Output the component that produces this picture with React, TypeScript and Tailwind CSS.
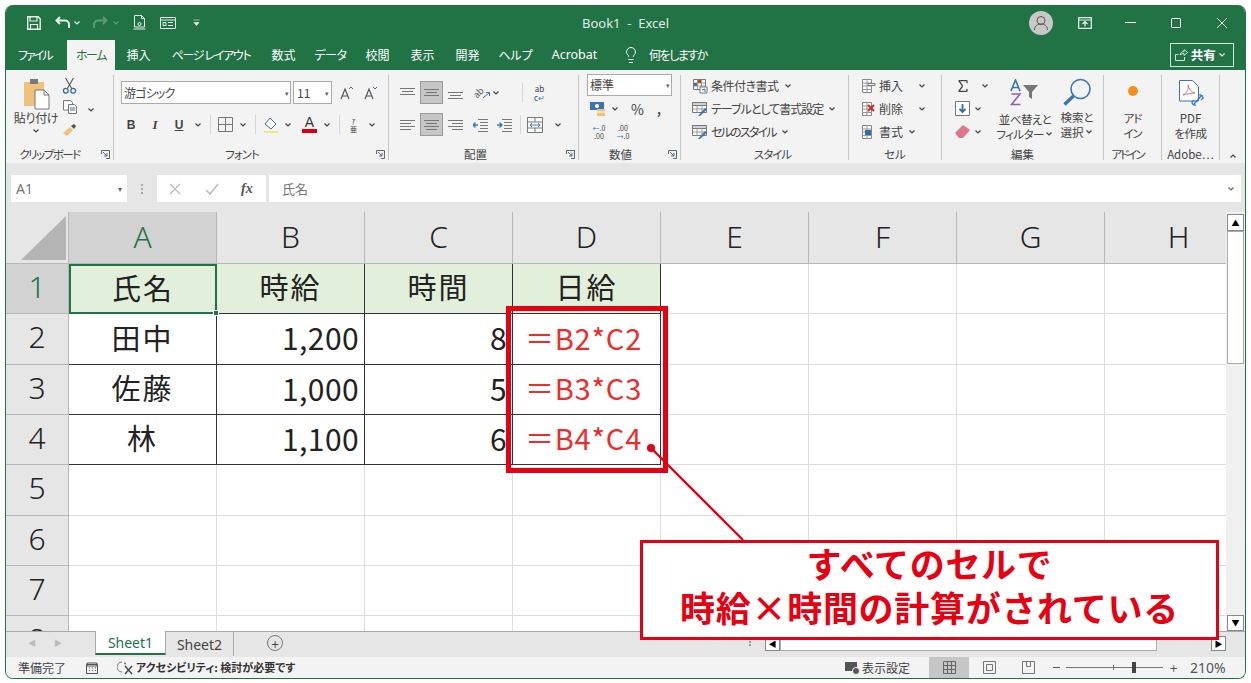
import * as React from "react"
import { Lightbulb, Sigma } from "lucide-react"

const jp = "font-['Noto_Sans_CJK_JP','Noto_Sans',sans-serif]"
const palt = "[font-feature-settings:'palt']"

function Chev({ className = "" }: { className?: string }) {
  return (
    <svg width="14" height="8" viewBox="0 0 14 8" className={className}>
      <path d="M4.500 2.500 7 5l2.500-2.500" fill="none" stroke="currentColor" strokeWidth="1.200" />
    </svg>
  )
}

function Launcher() {
  return (
    <svg width="9" height="9" viewBox="0 0 9 9" className="absolute bottom-[1px] right-[3px] text-[#666]">
      <path d="M.5 4V.5H8.500V8.500H5" fill="none" stroke="currentColor" />
      <path d="M2 2l4 4M6 3v3H3" fill="none" stroke="#4a6f8f" />
    </svg>
  )
}

function Lines({ w = 15, rows }: { w?: number; rows: [number, number, number][] }) {
  return (
    <svg width={w} height="14" viewBox={`0 0 ${w} 14`}>
      {rows.map(([x1, x2, y], i) => (
        <path key={i} d={`M${x1} ${y}H${x2}`} stroke="#777" strokeWidth="1" />
      ))}
    </svg>
  )
}

const topLines: [number, number, number][] = [[0, 15, 2.5], [2, 13, 5.5], [0, 15, 8.5]]
const midLines: [number, number, number][] = [[0, 15, 3.5], [2, 13, 6.5], [0, 15, 9.5]]
const botLines: [number, number, number][] = [[0, 15, 6.5], [2, 13, 9.5], [0, 15, 12.5]]
const leftLines: [number, number, number][] = [[0, 15, 2.5], [0, 11, 5.5], [0, 15, 8.5], [0, 11, 11.5]]
const centerLines: [number, number, number][] = [[0, 15, 2.5], [2, 13, 5.5], [0, 15, 8.5], [2, 13, 11.5]]
const rightLines: [number, number, number][] = [[0, 15, 2.5], [4, 15, 5.5], [0, 15, 8.5], [4, 15, 11.5]]

function Active({ children }: { children: React.ReactNode }) {
  return (
    <span className="ml-[5px] flex h-[23px] w-[23px] items-center justify-center border border-[#9a9a9a] bg-[#c6c6c6]">
      {children}
    </span>
  )
}

function Sep({ className = "" }: { className?: string }) {
  return <span className={`h-[19px] w-px bg-[#d6d6d6] ${className}`} />
}

function Group({
  width,
  label,
  labelClass = "",
  launcher,
  children,
}: {
  width: string
  label: string
  labelClass?: string
  launcher?: boolean
  children: React.ReactNode
}) {
  return (
    <div className={`relative mb-[3px] mt-[5px] flex shrink-0 flex-col border-r border-[#c4c4c4] ${width}`}>
      <div className="min-h-0 flex-1">{children}</div>
      <div className={`h-[12px] whitespace-nowrap text-center text-[11.5px] leading-[12px] text-[#444] ${palt} ${labelClass}`}>{label}</div>
      {launcher && <Launcher />}
    </div>
  )
}

function GridIcon({ accent = "#c43e1c" }: { accent?: string }) {
  return (
    <svg width="16" height="16" viewBox="0 0 16 16" className="shrink-0">
      <path d="M1.500 1.500h12v10h-12z" fill="#fff" stroke="#777" />
      <path d="M1.500 5h12M1.500 8h12M5.500 1.500v10M9.500 1.500v10" stroke="#999" />
      <path d="M6 2h3v3H6z" fill={accent} />
      <path d="M2 5h3v3H2z" fill="#3a74b5" />
      <path d="M8 9h7v6H8z" fill="#fff" stroke="#777" />
      <path d="M10 12l3-1v3" fill="none" stroke="#3a74b5" />
    </svg>
  )
}

function TableIcon() {
  return (
    <svg width="16" height="16" viewBox="0 0 16 16" className="shrink-0">
      <path d="M.5 1.500h14v10H.5z" fill="#fff" stroke="#777" />
      <path d="M.5 1.500h14v3H.5z" fill="#c9d3dd" stroke="#777" />
      <path d="M.5 8h14M5 4.500v7M10 4.500v7" stroke="#999" />
      <path d="M6 15l7-8 2 1.500-7 6.500z" fill="#3a74b5" />
    </svg>
  )
}

function CellIcon({ kind }: { kind: "ins" | "del" | "fmt" }) {
  return (
    <svg width="16" height="16" viewBox="0 0 16 16">
      <path d="M2.500 1.500h9v13h-9z" fill="#fff" stroke="#888" />
      <path d="M2.500 5h9M2.500 8h9M2.500 11.500h9M7 1.500v13" stroke="#999" />
      {kind === "ins" && <path d="M8 5.500h7v2H8z" fill="#fff" stroke="#777" />}
      {kind === "del" && <path d="M8 4l6 6M14 4l-6 6" stroke="#d1291a" strokeWidth="1.800" />}
      {kind === "fmt" && <path d="M5 6h6v5H5z" fill="#2f6ea9" />}
    </svg>
  )
}

function Ribbon() {
  return (
    <div className={`flex h-[93px] shrink-0 bg-[#f3f3f3] text-[12px] leading-[14px] text-[#444] ${jp}`}>
      <Group width="w-[108px]" label="クリップボード" labelClass="pr-[20px] tracking-[-1.5px]" launcher>
        <div className="flex">
          <div className="ml-[9px] flex w-[42px] flex-col items-center">
            <svg width="27" height="33" viewBox="0 0 27 33" className="mt-[2px]">
              <path d="M1 5h20v24H1z" fill="#eec27b" />
              <path d="M7 2h8v5H7z" fill="#7a7a7a" />
              <path d="M12 13h9l5 5v14H12z" fill="#fff" stroke="#777" />
              <path d="M21 13v5h5" fill="none" stroke="#777" />
            </svg>
            <span className={`mt-[1px] whitespace-nowrap tracking-[-0.3px] ${palt}`}>貼り付け</span>
            <Chev className="mt-[2px]" />
          </div>
          <div className="ml-[5px] flex flex-col">
            <svg width="15" height="16" viewBox="0 0 15 16" className="mt-[3px]">
              <path d="M3.500 0l6.500 11M11.500 0 5 11" fill="none" stroke="#555" strokeWidth="1.100" />
              <circle cx="3.800" cy="12.800" r="2.400" fill="none" stroke="#3f6d96" strokeWidth="1.300" />
              <circle cx="11.200" cy="12.800" r="2.400" fill="none" stroke="#3f6d96" strokeWidth="1.300" />
            </svg>
            <svg width="16" height="16" viewBox="0 0 16 16" className="mt-[5px]">
              <path d="M1.500 1.500h7l2 2V11h-9z" fill="#fff" stroke="#777" />
              <path d="M6.500 5.500h6l2 2v7h-8z" fill="#fff" stroke="#777" />
              <path d="M8 9h5M8 11h5" stroke="#4b6f8f" />
            </svg>
            <svg width="16" height="14" viewBox="0 0 16 14" className="mt-[8px]">
              <path d="M1 10l7-6 3 3-6 6z" fill="#eec27b" />
              <path d="M9 3l3-2 2 2-2 3z" fill="#555" />
            </svg>
          </div>
          <Chev className="ml-[6px] mt-[31px]" />
        </div>
      </Group>

      <Group width="w-[275px]" label="フォント" labelClass="pr-[18px] tracking-[-1px]" launcher>
        <div className="ml-[7px] mt-[6px] flex h-[23px] items-center">
          <div className={`flex h-full w-[170px] items-center justify-between border border-[#ababab] bg-white pl-[2px] pr-[1px] ${palt}`}>
            <span className="tracking-[-0.8px]">游ゴシック</span>
            <span className="text-[7px] text-[#666]">▾</span>
          </div>
          <div className="ml-[2px] flex h-full w-[39px] items-center justify-between border border-[#ababab] bg-white pl-[3px] pr-[2px]">
            <span>11</span>
            <span className="text-[7px] text-[#666]">▾</span>
          </div>
          <svg width="13" height="14" viewBox="0 0 13 14" className="ml-[8px]">
            <path d="M1 13 5 3l4 10M2.500 10h5" fill="none" stroke="#555" strokeWidth="1.200" />
            <path d="M9 3l2-2 2 2" fill="none" stroke="#3f6d96" />
          </svg>
          <svg width="13" height="14" viewBox="0 0 13 14" className="ml-[11px]">
            <path d="M1 13 5 3l4 10M2.500 10h5" fill="none" stroke="#555" strokeWidth="1.200" />
            <path d="M9 1l2 2 2-2" fill="none" stroke="#3f6d96" />
          </svg>
        </div>
        <div className="ml-[5px] mt-[9px] flex h-[23px] items-center">
          <span className="w-[24px] text-center font-['Liberation_Sans',sans-serif] text-[12px] font-bold">B</span>
          <span className="w-[24px] text-center font-['Liberation_Serif',serif] text-[13px] font-bold italic">I</span>
          <span className="w-[24px] text-center font-['Liberation_Sans',sans-serif] text-[12px] font-bold underline">U</span>
          <Chev />
          <Sep className="ml-[5px]" />
          <svg width="15" height="15" viewBox="0 0 15 15" className="ml-[7px]">
            <path d="M.5.500h14v14H.5zM7.500.500v14M.5 7.500h14" fill="none" stroke="#777" />
          </svg>
          <Chev className="ml-[3px]" />
          <Sep className="ml-[5px]" />
          <svg width="14" height="17" viewBox="0 0 14 17" className="ml-[8px]">
            <path d="M6 2l6 6-5 5-6-5z" fill="#fff" stroke="#4b6f8f" />
            <path d="M0 15h14v2H0z" fill="#f5e68c" />
          </svg>
          <Chev className="ml-[3px]" />
          <span className="ml-[7px] flex w-[15px] flex-col items-center">
            <span className="font-['Liberation_Sans',sans-serif] text-[14px] leading-[13px] text-[#333]">A</span>
            <span className="h-[4px] w-[15px] bg-[#d8000c]" />
          </span>
          <Chev className="ml-[3px]" />
          <Sep className="ml-[5px]" />
          <span className="ml-[9px] w-[9px] text-center text-[7px] leading-[8px]">
            ｱ<br />亜
          </span>
          <Chev className="ml-[7px]" />
        </div>
      </Group>

      <Group width="w-[190px]" label="配置" labelClass="pr-[16px]" launcher>
        <div className="ml-[11px] mt-[6px] flex h-[23px] items-center">
          <Lines rows={topLines} />
          <Active><Lines rows={midLines} /></Active>
          <span className="ml-[5px]"><Lines rows={botLines} /></span>
          <span className="ml-[10px] flex w-[17px] items-center">
            <span className="-rotate-45 text-[9px] leading-none text-[#555]">ab</span>
            <svg width="7" height="8" viewBox="0 0 7 8" className="-ml-[1px] mt-[4px] shrink-0">
              <path d="M0 7l6-5M3 1.500h3.500V5" fill="none" stroke="#3a74b5" />
            </svg>
          </span>
          <Chev className="-ml-px" />
          <Sep className="ml-[19px]" />
          <span className="ml-[9px] w-[15px] text-center text-[8px] leading-[9px] text-[#444]">
            ab<br />c<span className="text-[#3a74b5]">↵</span>
          </span>
        </div>
        <div className="ml-[11px] mt-[9px] flex h-[23px] items-center">
          <Lines rows={leftLines} />
          <Active><Lines rows={centerLines} /></Active>
          <span className="ml-[5px]"><Lines rows={rightLines} /></span>
          <svg width="15" height="14" viewBox="0 0 15 14" className="ml-[10px]">
            <path d="M5 1.500h10M7 4.500h8M7 7.500h8M7 10.500h8M5 13.500h10" stroke="#777" />
            <path d="M5 7H0M2.500 4.500 0 7l2.500 2.500" fill="none" stroke="#2f7cc4" strokeWidth="1.400" />
          </svg>
          <svg width="15" height="14" viewBox="0 0 15 14" className="ml-[9px]">
            <path d="M5 1.500h10M7 4.500h8M7 7.500h8M7 10.500h8M5 13.500h10" stroke="#777" />
            <path d="M0 7h5M2.500 4.500 5 7 2.500 9.500" fill="none" stroke="#2f7cc4" strokeWidth="1.400" />
          </svg>
          <Sep className="ml-[8px]" />
          <svg width="16" height="16" viewBox="0 0 16 16" className="ml-[6px]">
            <path d="M.5.500h15v15H.5zM.5 5h15M.5 11h15M8 .5V5M8 11v4.500" fill="#fff" stroke="#777" />
            <path d="M3 8h10M5 6 3 8l2 2M11 6l2 2-2 2" fill="none" stroke="#2f7cc4" />
          </svg>
          <Chev className="ml-[8px]" />
        </div>
      </Group>

      <Group width="w-[102px]" label="数値" labelClass="pr-[18px]" launcher>
        <div className={`-mt-px ml-[8px] flex h-[22px] w-[85px] items-center justify-between border border-[#ababab] bg-white pl-[2px] pr-[1px] ${palt}`}>
          <span>標準</span>
          <span className="text-[7px] text-[#666]">▾</span>
        </div>
        <div className="ml-[11px] mt-px flex h-[23px] items-center">
          <svg width="16" height="16" viewBox="0 0 16 16">
            <path d="M0 1h14v8H0z" fill="#3a74b5" />
            <circle cx="7" cy="5" r="2" fill="#fff" />
            <path d="M7 8h8v7H7z" fill="#eec27b" />
            <path d="M7 11h8" stroke="#fff" />
          </svg>
          <Chev className="ml-[2px]" />
          <span className="ml-[9px] text-[14px]">%</span>
          <span className="ml-[13px] font-bold">,</span>
        </div>
        <div className="ml-[13px] flex h-[23px] items-center text-[7px] leading-[8px] text-[#444]">
          <span className="w-[14px] text-center"><span className="text-[#2f7cc4]">←</span>.0<br />.00</span>
          <span className="ml-[10px] w-[14px] text-center">.00<br /><span className="text-[#2f7cc4]">→</span>.0</span>
        </div>
      </Group>

      <Group width="w-[168px]" label="スタイル" labelClass="pl-[16px] tracking-[-1px]">
        <div className={`-mt-px whitespace-nowrap pl-[11px] ${palt}`}>
          <div className="flex h-[23px] items-center gap-[3px]"><GridIcon /><span className="tracking-[-0.5px]">条件付き書式</span><Chev className="-ml-[1px]" /></div>
          <div className="flex h-[23px] items-center gap-[3px]"><TableIcon /><span className="tracking-[-1px]">テーブルとして書式設定</span><Chev className="-ml-[1px]" /></div>
          <div className="flex h-[23px] items-center gap-[3px]"><TableIcon /><span className="tracking-[-1.8px]">セルのスタイル</span><Chev className="-ml-[1px]" /></div>
        </div>
      </Group>

      <Group width="w-[93px]" label="セル">
        <div className={`-mt-px pl-[11px] ${palt}`}>
          <div className="flex h-[23px] items-center"><CellIcon kind="ins" /><span className="ml-[3px]">挿入</span><Chev className="ml-[12px]" /></div>
          <div className="flex h-[23px] items-center"><CellIcon kind="del" /><span className="ml-[3px]">削除</span><Chev className="ml-[12px]" /></div>
          <div className="flex h-[23px] items-center"><CellIcon kind="fmt" /><span className="ml-[3px]">書式</span><Chev className="ml-[2px]" /></div>
        </div>
      </Group>

      <Group width="w-[162px]" label="編集">
        <div className="flex">
          <div className="-mt-px w-[58px] pl-[13px]">
            <div className="flex h-[23px] items-center">
              <Sigma size={16} strokeWidth={2} className="text-[#444]" />
              <Chev className="ml-[7px]" />
            </div>
            <div className="flex h-[23px] items-center">
              <svg width="15" height="15" viewBox="0 0 15 15">
                <path d="M.5.500h14v14H.5z" fill="#fff" stroke="#777" />
                <path d="M7.500 3v8M4.500 8l3 3 3-3" fill="none" stroke="#2f6ea9" strokeWidth="1.800" />
              </svg>
              <Chev className="ml-[1px]" />
            </div>
            <div className="flex h-[23px] items-center">
              <svg width="15" height="13" viewBox="0 0 15 13">
                <path d="M0 8l8-8 7 5-7 8H4z" fill="#e0748b" />
              </svg>
              <Chev className="ml-[1px]" />
            </div>
          </div>
          <div className={`flex w-[50px] flex-col items-center text-[11.5px] tracking-[-0.6px] ${palt}`}>
            <svg width="30" height="27" viewBox="0 0 30 27" className="mt-[4px]">
              <path d="M1 12 5.500 1 10 12M2.500 8.500h6" fill="none" stroke="#3a74b5" strokeWidth="1.600" />
              <path d="M1.500 15H10L1.500 25.500H10.500" fill="none" stroke="#8d63b8" strokeWidth="1.600" />
              <path d="M13 6h15l-6 7v7l-3-2v-5z" fill="#777" />
            </svg>
            <span className="mt-[6px] whitespace-nowrap">並べ替えと</span>
            <span className="mt-px flex items-center whitespace-nowrap">フィルター<Chev className="-mx-[2px]" /></span>
          </div>
          <div className={`ml-[4px] flex w-[46px] flex-col items-center text-[11.5px] ${palt}`}>
            <svg width="30" height="28" viewBox="0 0 30 28" className="mt-[3px]">
              <circle cx="18.500" cy="11" r="9.500" fill="none" stroke="#3a74b5" strokeWidth="1.600" />
              <path d="M11.500 18 2.500 26.500" stroke="#3a74b5" strokeWidth="3.400" />
            </svg>
            <span className="mt-[4px] whitespace-nowrap">検索と</span>
            <span className="mt-px flex items-center whitespace-nowrap">選択<Chev className="-mx-[2px]" /></span>
          </div>
        </div>
      </Group>

      <Group width="w-[58px]" label="アドイン" labelClass="pr-[10px] tracking-[-2px]">
        <div className={`flex flex-col items-center text-[11.5px] ${palt}`}>
          <span className="mt-[11px] h-[10px] w-[10px] rounded-full bg-[#f59020]" />
          <span className="mt-[15px] tracking-[-1px]">アド</span>
          <span className="mt-px tracking-[-1px]">イン</span>
        </div>
      </Group>

      <Group width="w-[58px]" label="Adobe…">
        <div className={`flex flex-col items-center text-[11.5px] ${palt}`}>
          <svg width="28" height="28" viewBox="0 0 28 28" className="mt-[5px]">
            <path d="M2.500.5h13l6 6V21h-19z" fill="#fff" stroke="#3a74b5" />
            <path d="M6 15c4-2 6-6 5-10 1 4 3 7 7 8-4 0-8 1-12 2z" fill="none" stroke="#c4615a" strokeWidth=".8" />
            <path d="M17 24l7-8M19 25a3 3 0 0 1-4-3l2-2M22 15a3 3 0 0 1 4 3l-2 2" fill="none" stroke="#3a74b5" strokeWidth="1.300" />
          </svg>
          <span className="mt-[3px]">PDF</span>
          <span className="mt-px tracking-[-0.5px]">を作成</span>
        </div>
      </Group>

      <div className="flex flex-1 items-end justify-center pb-[1px]">
        <Chev className="mb-[2px] rotate-180" />
      </div>
    </div>
  )
}

const tabs = [
  { t: "挿入", c: "w-[45px]" },
  { t: "ページ レイアウト", c: "w-[100px] tracking-[-1.3px]" },
  { t: "数式", c: "w-[45px]" },
  { t: "データ", c: "w-[49px] tracking-[-0.5px]" },
  { t: "校閲", c: "w-[45px]" },
  { t: "表示", c: "w-[45px]" },
  { t: "開発", c: "w-[45px]" },
  { t: "ヘルプ", c: "w-[51px]" },
  { t: "Acrobat", c: "w-[67px] font-['Noto_Sans',sans-serif] text-[12.5px]" },
]

function TitleBar() {
  return (
    <div className={`h-[65px] shrink-0 bg-[#217346] text-white ${jp}`}>
      <div className="flex h-[35px] items-center text-[#e8f1ec]">
        <svg width="14" height="14" viewBox="0 0 14 14" className="ml-[21px]">
          <path d="M.7.7h10.500l2 2v10.600H.7z" fill="none" stroke="currentColor" strokeWidth="1.400" />
          <path d="M3 1v4h7V1M3.500 13V8.500h7V13" fill="none" stroke="currentColor" strokeWidth="1.200" />
        </svg>
        <svg width="16" height="13" viewBox="0 0 16 13" className="ml-[14px]">
          <path d="M5 1 1.500 4.500 5 8M2 4.500h8a4 4 0 0 1 4 4V12" fill="none" stroke="currentColor" strokeWidth="2" />
        </svg>
        <Chev className="-ml-[1px]" />
        <svg width="16" height="13" viewBox="0 0 16 13" className="ml-[8px] text-[#5b9a78]">
          <path d="M11 1l3.500 3.500L11 8M14 4.500H6a4 4 0 0 0-4 4V12" fill="none" stroke="currentColor" strokeWidth="2" />
        </svg>
        <Chev className="ml-px text-[#5b9a78]" />
        <svg width="13" height="15" viewBox="0 0 13 15" className="ml-[10px]">
          <path d="M1.500.5h7l3 3V12h-10zM8.500.5v3h3M.5 14h12" fill="none" stroke="currentColor" />
          <circle cx="6.500" cy="9" r="1.500" fill="none" stroke="currentColor" />
        </svg>
        <svg width="16" height="12" viewBox="0 0 16 12" className="ml-[14px]">
          <path d="M.5.500h15v11H.5zM.5 3h15M3 5.500h3v3H3zM8 5.500h5M8 8.500h5" fill="none" stroke="currentColor" />
        </svg>
        <svg width="7" height="7" viewBox="0 0 7 7" className="ml-[17px]">
          <path d="M.5 1h6M1 3.500h5L3.500 6.500z" fill="currentColor" stroke="currentColor" strokeWidth=".6" />
        </svg>
        <span className="ml-[382px] mt-[3px] w-[95px] whitespace-nowrap font-['Noto_Sans',sans-serif] text-[13px] text-[#e0ece5]">Book1&nbsp;&nbsp;-&nbsp;&nbsp;Excel</span>
        <span className="ml-[352px] flex h-[24px] w-[24px] items-center justify-center rounded-full bg-[#c8c8c8]">
          <svg width="16" height="16" viewBox="0 0 16 16">
            <circle cx="8" cy="5.500" r="4" fill="none" stroke="#555" />
            <path d="M1.500 15c0-4 3-6 6.500-6s6.500 2 6.500 6" fill="none" stroke="#555" />
          </svg>
        </span>
        <svg width="14" height="12" viewBox="0 0 14 12" className="ml-[25px]">
          <path d="M.7.7h12.600v10.600H.7zM.7 3h12.600M7 9.500V5M4.500 7 7 4.500 9.500 7" fill="none" stroke="currentColor" strokeWidth="1.200" />
        </svg>
        <span className="ml-[33px] h-px w-[11px] bg-white" />
        <span className="ml-[35px] h-[10px] w-[10px] rounded-[1px] border border-white" />
        <svg width="12" height="12" viewBox="0 0 12 12" className="ml-[35px]">
          <path d="M1 1l10 10M11 1 1 11" stroke="currentColor" />
        </svg>
      </div>
      <div className="flex h-[30px] items-end text-[12px] leading-[14px]">
        <span className={`mb-[8px] ml-[12px] w-[49px] whitespace-nowrap tracking-[-2px] ${palt}`}>ファイル</span>
        <span className={`flex h-[30px] w-[48px] items-center justify-center bg-[#f3f3f3] tracking-[-1.500px] text-[#217346] ${palt}`}>ホーム</span>
        <div className={`flex h-[30px] items-center pl-[1px] ${palt}`}>
          {tabs.map((tab) => (
            <span key={tab.t} className={`whitespace-nowrap text-center ${tab.c}`}>
              {tab.t}
            </span>
          ))}
          <Lightbulb size={18} strokeWidth={1.300} className="ml-[14px]" />
          <span className="ml-[9px] whitespace-nowrap tracking-[-1.500px]">何をしますか</span>
          <span className="ml-[463px] flex h-[24px] w-[64px] items-center border border-[#d5e5dc] pl-[4px] text-[12.5px] font-bold">
            <svg width="13" height="12" viewBox="0 0 13 12" className="mr-[3px] shrink-0">
              <path d="M.5 5.500h3M.5 5.500v6h9V8M5 6c.5-2.500 2-3.500 4-3.500V.5l3.500 3L9 6.500V4.500C7.500 4.500 6 5 5 6z" fill="none" stroke="currentColor" strokeWidth=".8" />
            </svg>
            共有
            <Chev className="-ml-[1px]" />
          </span>
        </div>
      </div>
    </div>
  )
}

function FormulaBar() {
  return (
    <div className={`flex h-[49px] shrink-0 items-start bg-[#e6e6e6] pl-[5px] pr-[4px] pt-[12px] text-[13px] text-[#777] ${jp}`}>
      <div className="flex h-[27px] w-[116px] items-center justify-between rounded-[1px] bg-white pl-[5px] pr-[5px] font-['Noto_Sans',sans-serif] text-[14px]">
        <span>A1</span>
        <span className="text-[8px] text-[#666]">▾</span>
      </div>
      <div className="flex h-[27px] w-[30px] flex-col items-center justify-center gap-[2px]">
        <span className="h-[2px] w-[2px] bg-[#aaa]" />
        <span className="h-[2px] w-[2px] bg-[#aaa]" />
        <span className="h-[2px] w-[2px] bg-[#aaa]" />
      </div>
      <div className="flex h-[27px] w-[109px] items-center bg-white pl-[12px]">
        <svg width="12" height="12" viewBox="0 0 12 12">
          <path d="M1 1l10 10M11 1 1 11" stroke="#bbb" strokeWidth="1.300" />
        </svg>
        <svg width="14" height="12" viewBox="0 0 14 12" className="ml-[24px]">
          <path d="M1 7l4 4 8-10" fill="none" stroke="#bbb" strokeWidth="1.600" />
        </svg>
        <span className="ml-[22px] font-['Liberation_Serif',serif] text-[14px] font-bold italic text-[#555]">fx</span>
      </div>
      <div className="ml-[3px] flex h-[27px] flex-1 items-center justify-between bg-white pl-[13px] pr-[3px]">
        <span>氏名</span>
        <Chev className="text-[#666]" />
      </div>
    </div>
  )
}

const colLetters = ["A", "B", "C", "D", "E", "F", "G", "H"]
const sheet: string[][] = [
  ["氏名", "時給", "時間", "日給"],
  ["田中", "1,200", "8", "＝B2*C2"],
  ["佐藤", "1,000", "5", "＝B3*C3"],
  ["林", "1,100", "6", "＝B4*C4"],
]

function Cell({ row, col }: { row: number; col: number }) {
  const value = row < 4 && col < 4 ? sheet[row][col] : ""
  if (row === 0 && col === 0) {
    return (
      <div className="relative flex items-center justify-center border-2 border-[#217346] bg-[#e2efda] pb-[4px] tracking-[2px]">
        {value}
        <span className="absolute -bottom-[4px] -right-[4px] h-[6px] w-[6px] border border-white bg-[#217346]" />
      </div>
    )
  }
  if (row < 4 && col < 4) {
    const right = row > 0 && (col === 1 || col === 2)
    return (
      <div
        className={`flex items-center border-b border-r border-[#333] pb-[4px] ${right ? "justify-end pr-[5px] text-[30px] tracking-[0.4px]" : "justify-center"} ${row === 0 ? "bg-[#e2efda] tracking-[2px]" : ""} ${col === 3 && row > 0 ? "pr-[6px] tracking-[0.8px] text-[#ee2c2c]" : ""} ${col === 0 && row > 0 ? "tracking-[2px]" : ""}`}
      >
        {value}
      </div>
    )
  }
  return <div className="border-b border-r border-[#dcdcdc]" />
}

function Sheet() {
  return (
    <div className={`flex h-[419px] shrink-0 overflow-hidden bg-white ${jp}`}>
      <div className="w-[1220px] shrink-0 overflow-hidden">
        <div className="grid h-[470px] w-[1247px] grid-cols-[63px_148px_148px_148px_148px_148px_148px_148px_148px] grid-rows-[52px_50px_51px_50px_50px_51px_50px_50px_66px] text-[29px] leading-none text-[#222]">
          <div className="flex items-end justify-end border-b border-r border-[#b8b8b8] bg-[#e6e6e6] pb-[3px] pr-[2px]">
            <svg width="45" height="44" viewBox="0 0 45 44">
              <path d="M45 0v44H0z" fill="#b4b4b4" />
            </svg>
          </div>
          {colLetters.map((c, i) => (
            <div
              key={c}
              className={`flex items-center justify-center border-b border-r border-[#b8b8b8] pb-[2px] font-['Noto_Sans',sans-serif] text-[30px] font-light ${i === 0 ? "bg-[#d2d2d2] text-[#217346]" : "bg-[#e6e6e6] text-[#222]"}`}
            >
              {c}
            </div>
          ))}
          {[0, 1, 2, 3, 4, 5, 6, 7].map((row) => (
            <React.Fragment key={row}>
              <div
                className={`flex justify-center border-b border-r border-[#b8b8b8] pt-[8px] font-['Noto_Sans',sans-serif] text-[30px] font-light ${row === 0 ? "bg-[#d2d2d2] text-[#217346]" : "bg-[#e6e6e6] text-[#222]"}`}
              >
                {row + 1}
              </div>
              {colLetters.map((_, col) => (
                <Cell key={col} row={row} col={col} />
              ))}
            </React.Fragment>
          ))}
        </div>
      </div>
      <div className="flex w-[19px] shrink-0 flex-col items-center bg-[#f0f0f0] pt-[2px]">
        <span className="flex h-[17px] w-[17px] items-center justify-center border border-[#888] bg-white text-[8px] leading-none text-black">▲</span>
        <span className="h-[133px] w-[17px] border border-[#ababab] bg-white" />
        <span className="flex-1" />
        <span className="flex h-[16px] w-[17px] items-center justify-center border border-[#888] bg-white text-[8px] leading-none text-black">▼</span>
      </div>
    </div>
  )
}

function Tabs() {
  return (
    <div className={`flex h-[26px] shrink-0 border-t border-[#aaa] bg-[#e6e6e6] text-[14px] text-[#444] ${jp}`}>
      <span className="ml-[22px] mt-[5px] w-[26px] text-[8px] text-[#bbb]">◀</span>
      <span className="mt-[5px] w-[41px] text-[8px] text-[#bbb]">▶</span>
      <span className="-mt-px flex h-[24px] w-[71px] items-center justify-center border-b-2 border-l border-r border-[#aaa] border-b-[#217346] bg-white font-['Noto_Sans',sans-serif] text-[#217346]">Sheet1</span>
      <span className="flex h-[24px] w-[68px] items-center justify-center border-r border-[#aaa] font-['Noto_Sans',sans-serif]">Sheet2</span>
      <span className="ml-[33px] mt-[3px] flex h-[16px] w-[16px] items-center justify-center rounded-full border border-[#777] text-[13px] leading-none">+</span>
      <span className="ml-[466px] mt-[6px] flex w-[3px] flex-col gap-[1px]">
        <span className="h-[2px] w-[2px] bg-[#999]" />
        <span className="h-[2px] w-[2px] bg-[#999]" />
        <span className="h-[2px] w-[2px] bg-[#999]" />
      </span>
      <div className="ml-[13px] mt-[4px] flex h-[15px] w-[461px] items-center">
        <span className="flex h-[15px] w-[15px] items-center justify-center border border-[#888] bg-white text-[8px] text-black">◀</span>
        <span className="h-[15px] w-[377px] border border-[#aaa] bg-white" />
        <span className="flex-1" />
        <span className="flex h-[15px] w-[15px] items-center justify-center border border-[#888] bg-white text-[8px] text-black">▶</span>
      </div>
    </div>
  )
}

function StatusBar() {
  return (
    <div className={`flex min-h-0 flex-1 items-center bg-[#f3f3f3] text-[12px] leading-none text-[#444] ${jp}`}>
      <span className={`ml-[12px] w-[68px] ${palt}`}>準備完了</span>
      <svg width="12" height="12" viewBox="0 0 12 12">
        <path d="M.5 2.500h11v9H.5z" fill="none" stroke="#555" />
        <path d="M1 1h10v3H1zM3 6h1M6 6h1M9 6h1M3 8.500h1M6 8.500h1M9 8.500h1" stroke="#555" fill="none" />
      </svg>
      <svg width="17" height="14" viewBox="0 0 17 14" className="ml-[19px]">
        <path d="M5 1a5 5 0 0 0 0 10" fill="none" stroke="#777" />
        <circle cx="8" cy="2.500" r="1" fill="#777" />
        <path d="M8 5l7 8M15 5l-7 8" stroke="#444" strokeWidth="1.400" />
      </svg>
      <span className={`ml-[2px] w-[170px] whitespace-nowrap text-[11px] font-bold text-[#333] ${palt}`}>アクセシビリティ: 検討が必要です</span>
      <span className="ml-[539px] flex items-center">
        <svg width="16" height="14" viewBox="0 0 16 14">
          <path d="M0 1h12v9H0z" fill="#555" />
          <circle cx="11" cy="10" r="3.500" fill="#555" stroke="#f3f3f3" />
        </svg>
        <span className={`ml-[1px] ${palt}`}>表示設定</span>
      </span>
      <span className="ml-[19px] flex h-[21px] w-[40px] items-center justify-center bg-[#c6c6c6]">
        <svg width="13" height="13" viewBox="0 0 13 13">
          <path d="M.5.500h12v12H.5zM4.500.500v12M8.500.500v12M.5 4.500h12M.5 8.500h12" fill="none" stroke="#666" />
        </svg>
      </span>
      <svg width="13" height="13" viewBox="0 0 13 13" className="ml-[14px]">
        <path d="M.5.500h12v12H.5z" fill="none" stroke="#777" />
        <path d="M3.500 3.500h6v6h-6z" fill="none" stroke="#777" />
      </svg>
      <svg width="13" height="13" viewBox="0 0 13 13" className="ml-[26px]">
        <path d="M.5 12.500V.5h12v12M4.500.5v5h4v-5" fill="none" stroke="#777" />
        <path d="M.5 12.500h12" stroke="#777" />
      </svg>
      <span className="ml-[18px] h-px w-[7px] bg-[#555]" />
      <span className="relative ml-[6px] h-px w-[97px] bg-[#777]">
        <span className="absolute -top-[2px] left-[47px] h-[5px] w-px bg-[#777]" />
        <span className="absolute -top-[5px] left-[66px] h-[11px] w-[4px] bg-[#444]" />
      </span>
      <span className="ml-[6px] w-[9px] text-center text-[13px] text-[#555]">+</span>
      <span className="ml-[12px] font-['Noto_Sans',sans-serif] text-[14px] text-[#555]">210%</span>
    </div>
  )
}

export default function App() {
  return (
    <div className="relative h-[683px] w-[1251px] overflow-hidden bg-white pb-[4px] pl-[5px] pr-[5px] pt-[5px]">
      <div className="flex h-full flex-col overflow-hidden rounded-[8px] border-x border-b border-[#217346]">
        <TitleBar />
        <Ribbon />
        <FormulaBar />
        <Sheet />
        <Tabs />
        <StatusBar />
      </div>

      {/* annotation over the sheet */}
      <div className="absolute left-[506px] top-[306px] h-[167px] w-[162px] border-[5px] border-[#e60012]" />
      <svg width="110" height="110" viewBox="0 0 110 110" className="absolute left-[641px] top-[438px]">
        <circle cx="10" cy="10" r="4" fill="#e60012" />
        <path d="M10 10l92 92" stroke="#e60012" strokeWidth="2.400" />
      </svg>
      <div className={`absolute left-[640px] top-[540px] flex h-[100px] w-[579px] items-center justify-center border-[3px] border-[#e60012] bg-white pb-[10px] text-center text-[35px] font-bold leading-[44px] tracking-[0.7px] text-[#e60012] ${jp}`}>
        <span>
          すべてのセルで
          <br />
          時給×時間の計算がされている
        </span>
      </div>
    </div>
  )
}
